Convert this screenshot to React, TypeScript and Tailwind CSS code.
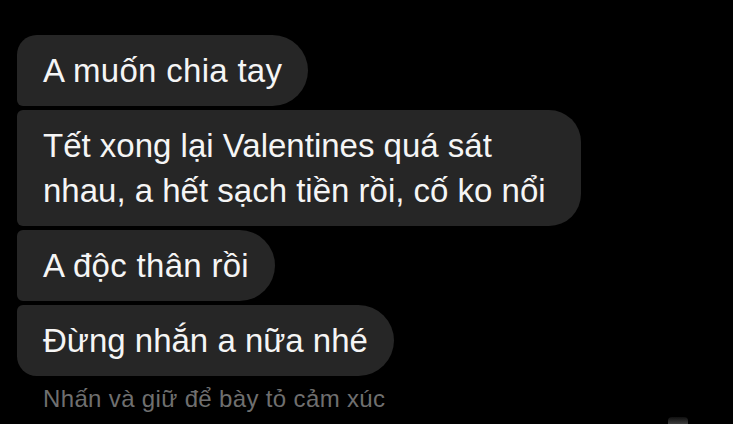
import React from 'react';

const messages = [
  { text: 'A muốn chia tay', shape: 'rounded-r-[36px] rounded-tl-[20px] rounded-bl-[6px] tracking-[0.3px]' },
  {
    text: 'Tết xong lại Valentines quá sát nhau, a hết sạch tiền rồi, cố ko nổi',
    shape: 'rounded-r-[32px] rounded-l-[6px] max-w-[564px]',
  },
  { text: 'A độc thân rồi', shape: 'rounded-r-[36px] rounded-l-[6px] tracking-[0.3px]' },
  { text: 'Đừng nhắn a nữa nhé', shape: 'rounded-r-[36px] rounded-tl-[6px] rounded-bl-[20px]' },
];

const App = () => {
  return (
    <div
      className="relative h-[424px] w-full overflow-hidden bg-black"
      style={{ fontFamily: '"Liberation Sans", Arial, sans-serif' }}
    >
      <div className="flex flex-col items-start gap-1 pl-[17px] pt-[35px]">
        {messages.map((m, i) => (
          <div
            key={i}
            className={`bg-[#262626] px-[26px] py-[13px] text-[33px] leading-[45px] text-[#f5f5f5] ${m.shape}`}
          >
            {m.text}
          </div>
        ))}
        <p className="mt-[5px] pl-[26px] text-[24px] leading-[28px] tracking-[0.35px] text-[#6f6f6f]">
          Nhấn và giữ để bày tỏ cảm xúc
        </p>
      </div>

      {/* mép trên của nút nổi, bị cắt ở đáy ảnh */}
      <div className="absolute left-[668px] top-[417px] h-[10px] w-[20px] rounded-t-[4px] bg-gradient-to-b from-[#1a1a1a] to-[#8a8a8a] opacity-60" />
    </div>
  );
};

export default App;
